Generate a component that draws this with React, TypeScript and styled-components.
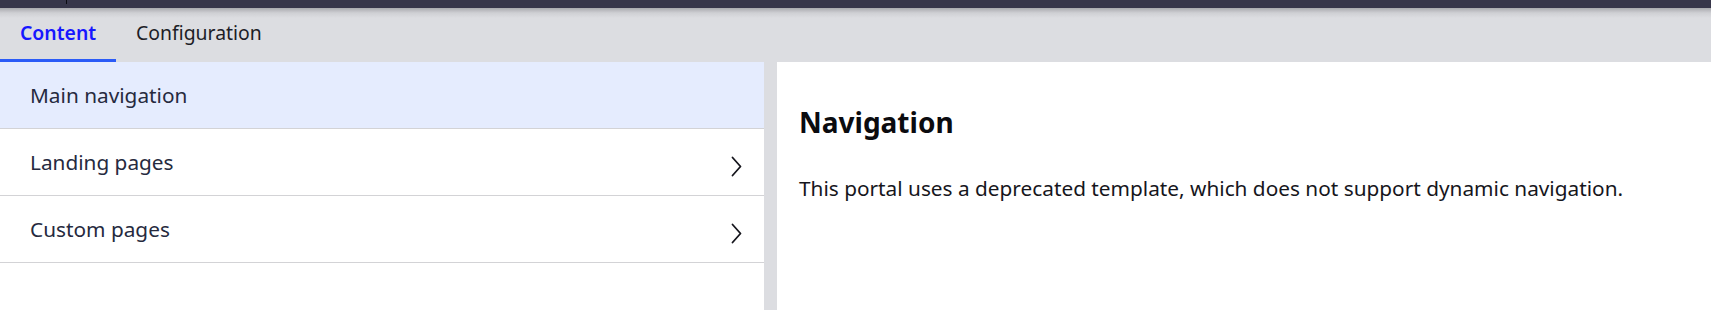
import React, { useState } from 'react';
import styled, { createGlobalStyle } from 'styled-components';

const GlobalStyle = createGlobalStyle`
    html, body {
        margin: 0;
        padding: 0;
        background: #ffffff;
    }
    body {
        font-family: 'Noto Sans', 'Open Sans', sans-serif;
        -webkit-font-smoothing: antialiased;
    }
`;

interface NavItem {
    label: string;
    hasChildren: boolean;
}

const navItems: NavItem[] = [
    { label: 'Main navigation', hasChildren: false },
    { label: 'Landing pages', hasChildren: true },
    { label: 'Custom pages', hasChildren: true },
];

const tabs = ['Content', 'Configuration'];

const ChevronRight: React.FC = () => (
    <StyledChevron width='11' height='21' viewBox='0 0 11 21' fill='none'>
        <path d='M1.5 1.5 L9.5 10.5 L1.5 19.5' stroke='#15151c' strokeWidth='1.8' strokeLinecap='round' strokeLinejoin='round' />
    </StyledChevron>
);

const App: React.FC = () => {
    const [activeTab, setActiveTab] = useState('Content');
    const [selected, setSelected] = useState('Main navigation');

    return (
        <>
            <GlobalStyle />
            <StyledPage>
                <StyledTopBar>
                    <StyledTick />
                </StyledTopBar>
                <StyledTabBar>
                    {tabs.map((tab) => (
                        <StyledTab key={tab} $active={tab === activeTab} onClick={() => setActiveTab(tab)}>
                            {tab}
                        </StyledTab>
                    ))}
                </StyledTabBar>
                <StyledBody>
                    <StyledSidebar>
                        {navItems.map((item) => (
                            <StyledNavRow
                                key={item.label}
                                $selected={item.label === selected}
                                onClick={() => setSelected(item.label)}
                            >
                                <span>{item.label}</span>
                                {item.hasChildren && <ChevronRight />}
                            </StyledNavRow>
                        ))}
                    </StyledSidebar>
                    <StyledSplitter />
                    <StyledDetail>
                        <StyledHeading>Navigation</StyledHeading>
                        <StyledText>
                            This portal uses a deprecated template, which does not support dynamic navigation.
                        </StyledText>
                    </StyledDetail>
                </StyledBody>
            </StyledPage>
        </>
    );
};

const StyledPage = styled.div`
    display: flex;
    flex-direction: column;
    width: 100%;
    height: 310px;
    overflow: hidden;
`;

const StyledTopBar = styled.div`
    position: relative;
    height: 8px;
    background: #37364a;
    flex-shrink: 0;
`;

const StyledTick = styled.div`
    position: absolute;
    left: 66px;
    top: 0;
    width: 1px;
    height: 4px;
    background: #0c0c12;
`;

const StyledTabBar = styled.div`
    display: flex;
    height: 54px;
    flex-shrink: 0;
    background: linear-gradient(#a9a9ae 0px, #cfd0d4 5px, #dcdde1 10px, #dcdde1 100%);
`;

const StyledTab = styled.div<{ $active: boolean }>`
    display: flex;
    align-items: center;
    box-sizing: border-box;
    padding: 0 20px 2px 20px;
    font-size: 19.4px;
    font-weight: ${(p) => (p.$active ? 600 : 400)};
    color: ${(p) => (p.$active ? '#1717ff' : '#1d1d27')};
    border-bottom: 3px solid ${(p) => (p.$active ? '#2b5bf7' : 'transparent')};
    cursor: pointer;
    &:first-child {
        width: 116px;
    }
`;

const StyledBody = styled.div`
    display: flex;
    flex: 1;
    min-height: 0;
`;

const StyledSidebar = styled.div`
    width: 764px;
    flex-shrink: 0;
    display: flex;
    flex-direction: column;
    background: #ffffff;
`;

const StyledNavRow = styled.div<{ $selected: boolean }>`
    display: flex;
    align-items: center;
    justify-content: space-between;
    height: 67px;
    box-sizing: border-box;
    padding: 0 22px 0 30px;
    border-bottom: 1px solid #d3d3d6;
    background: ${(p) => (p.$selected ? '#e5ecfe' : '#ffffff')};
    color: #262a3e;
    font-size: 20.8px;
    cursor: pointer;
`;

const StyledChevron = styled.svg`
    margin-top: 9px;
    flex-shrink: 0;
`;

const StyledSplitter = styled.div`
    width: 13px;
    flex-shrink: 0;
    background: #dcdde1;
`;

const StyledDetail = styled.div`
    flex: 1;
    padding: 42px 22px 0 22px;
    background: #ffffff;
`;

const StyledHeading = styled.h2`
    margin: 0;
    font-size: 28px;
    font-weight: 700;
    line-height: 36px;
    color: #0b0b0f;
`;

const StyledText = styled.p`
    margin: 35px 0 0 0;
    font-size: 20.8px;
    line-height: 26px;
    color: #16161c;
`;

export default App;
